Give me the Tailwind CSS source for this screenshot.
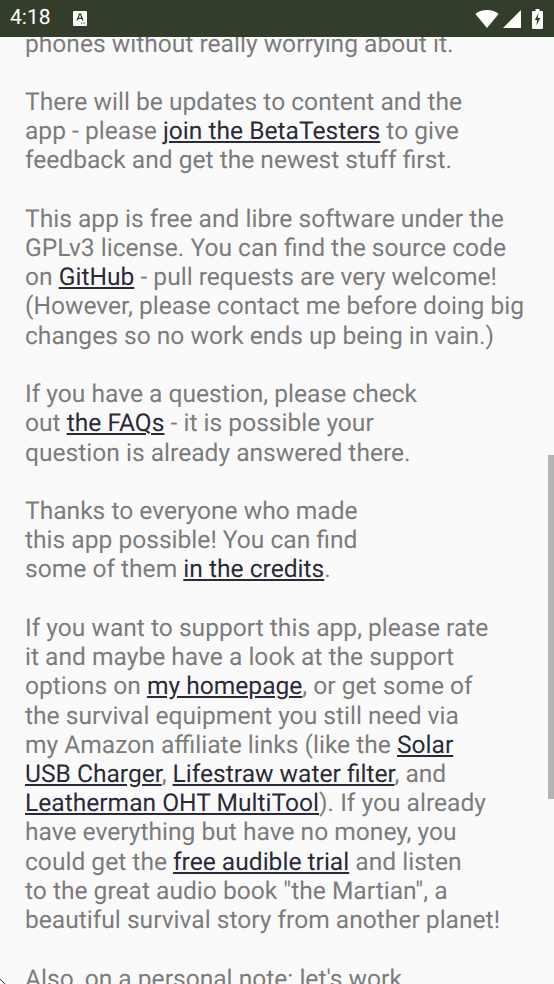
<!DOCTYPE html>
<html lang="en">
<head>
  <meta charset="UTF-8" />
  <title>About</title>
  <script src="https://cdn.jsdelivr.net/npm/@tailwindcss/browser@4"></script>
</head>
<body class="bg-[#fafafa] font-['Roboto',sans-serif] [text-rendering:geometricPrecision]">
  <div class="relative w-[554px] h-[984px] overflow-hidden flex flex-col">
    <!-- status bar -->
    <div class="h-[37px] shrink-0 bg-[#333d2c] flex items-center pl-[10px] pr-[11px] text-white z-10 relative">
      <span class="text-[21px] leading-none">4:18</span>
      <svg class="ml-[22px]" width="14" height="15" viewBox="0 0 14 15">
        <path fill="#fff" d="M1 0h12a1 1 0 0 1 1 1v13a1 1 0 0 1-1 1H1a1 1 0 0 1-1-1V1a1 1 0 0 1 1-1z"/>
        <path fill="#333d2c" d="M6 2.500h2l2.600 7H9.100l-.5-1.500H5.400l-.5 1.500H3.400zM5.800 6.800h2.400L7 3.600zM8 11.500h1v1H8zM9.700 11.500h1v1h-1zM11.400 11.500h1v1h-1z"/>
      </svg>
      <div class="ml-auto flex items-center">
        <svg width="24" height="18" viewBox="0 0 24 18"><path fill="#fff" d="M12 0C7.200 0 3.400 1.600.4 4L12 18 23.600 4C20.600 1.600 16.800 0 12 0z"/></svg>
        <svg class="ml-[4px]" width="18" height="18" viewBox="0 0 18 18"><path fill="#fff" d="M18 0v18H0z"/></svg>
        <svg class="ml-[11px]" width="11" height="20" viewBox="0 0 11 20"><path fill="#fff" d="M3.500 0h4v2H10a1 1 0 0 1 1 1v16a1 1 0 0 1-1 1H1a1 1 0 0 1-1-1V3a1 1 0 0 1 1-1h2.500z"/><path fill="#333d2c" d="M6.500 4 2.800 11h2.300l-.7 5.500L8.300 9H5.800z"/></svg>
      </div>
    </div>

    <!-- scrolled text -->
    <div class="flex-1 overflow-hidden pl-[25px]">
      <p class="-mt-[7.5px] text-[24.58px] leading-[29.22px] text-[#7c7c7c] whitespace-nowrap [&_a]:text-[#2a2a38] [&_a]:underline">
        phones without really worrying about it.<br><br>
        There will be updates to content and the<br>
        app - please <a href="#">join the BetaTesters</a> to give<br>
        feedback and get the newest stuff first.<br><br>
        This app is free and libre software under the<br>
        GPLv3 license. You can find the source code<br>
        on <a href="#">GitHub</a> - pull requests are very welcome!<br>
        (However, please contact me before doing big<br>
        changes so no work ends up being in vain.)<br><br>
        If you have a question, please check<br>
        out <a href="#">the FAQs</a> - it is possible your<br>
        question is already answered there.<br><br>
        Thanks to everyone who made<br>
        this app possible! You can find<br>
        some of them <a href="#">in the credits</a>.<br><br>
        If you want to support this app, please rate<br>
        it and maybe have a look at the support<br>
        options on <a href="#">my homepage</a>, or get some of<br>
        the survival equipment you still need via<br>
        my Amazon affiliate links (like the <a href="#">Solar</a><br>
        <a href="#">USB Charger</a>, <a href="#">Lifestraw water filter</a>, and<br>
        <a href="#">Leatherman OHT MultiTool</a>). If you already<br>
        have everything but have no money, you<br>
        could get the <a href="#">free audible trial</a> and listen<br>
        to the great audio book "the Martian", a<br>
        beautiful survival story from another planet!<br><br>
        Also, on a personal note: let's work
      </p>
    </div>

    <!-- overlay scrollbar -->
    <div class="absolute left-[548px] top-[455px] w-[6px] h-[344px] bg-[#b3b3b3]"></div>
    <!-- corner mark, bottom left -->
    <svg class="absolute left-0 top-[979px]" width="6" height="5" viewBox="0 0 6 5"><path d="M0 0l5 5" stroke="#333" stroke-width="1" fill="none"/></svg>
  </div>
</body>
</html>
